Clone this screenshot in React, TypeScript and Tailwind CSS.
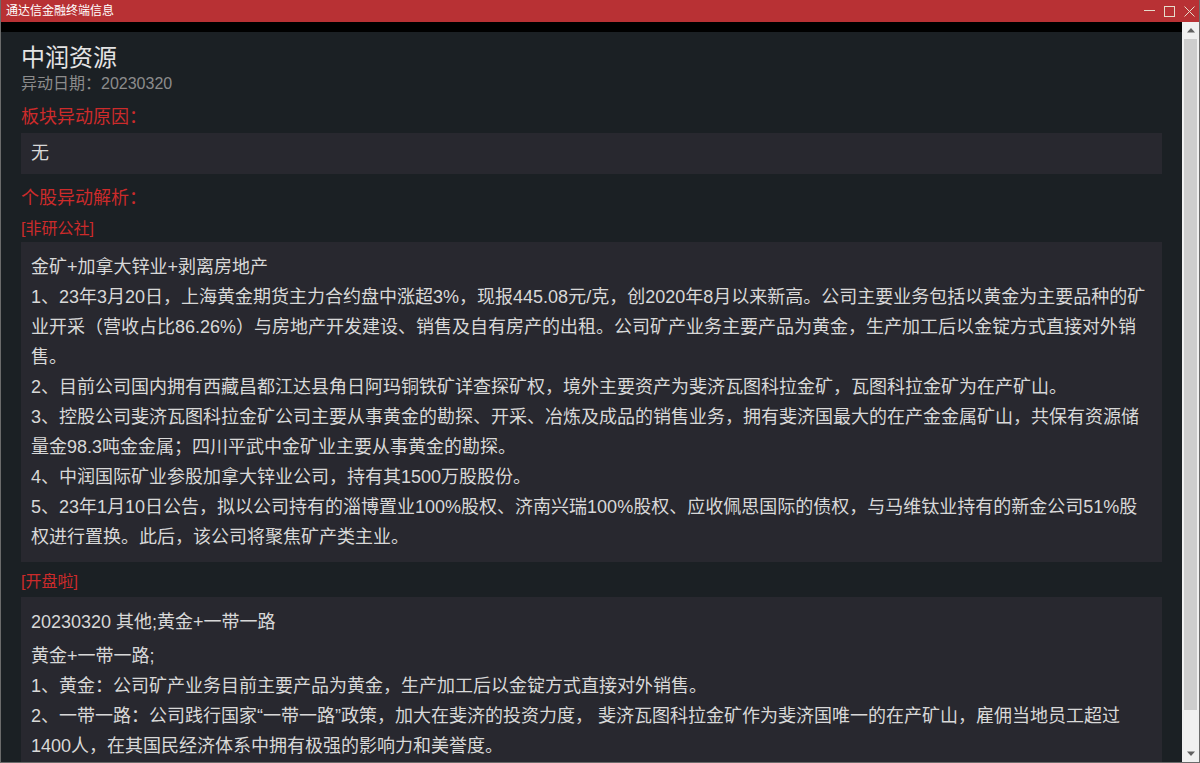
import React from "react";

const FONT = {
  fontFamily: '"Liberation Sans", "Noto Sans CJK SC", sans-serif',
};

const reasonLines = [
  "金矿+加拿大锌业+剥离房地产",
  "1、23年3月20日，上海黄金期货主力合约盘中涨超3%，现报445.08元/克，创2020年8月以来新高。公司主要业务包括以黄金为主要品种的矿",
  "业开采（营收占比86.26%）与房地产开发建设、销售及自有房产的出租。公司矿产业务主要产品为黄金，生产加工后以金锭方式直接对外销",
  "售。",
  "2、目前公司国内拥有西藏昌都江达县角日阿玛铜铁矿详查探矿权，境外主要资产为斐济瓦图科拉金矿，瓦图科拉金矿为在产矿山。",
  "3、控股公司斐济瓦图科拉金矿公司主要从事黄金的勘探、开采、冶炼及成品的销售业务，拥有斐济国最大的在产金金属矿山，共保有资源储",
  "量金98.3吨金金属；四川平武中金矿业主要从事黄金的勘探。",
  "4、中润国际矿业参股加拿大锌业公司，持有其1500万股股份。",
  "5、23年1月10日公告，拟以公司持有的淄博置业100%股权、济南兴瑞100%股权、应收佩思国际的债权，与马维钛业持有的新金公司51%股",
  "权进行置换。此后，该公司将聚焦矿产类主业。",
];

const kplLines = [
  "黄金+一带一路;",
  "1、黄金：公司矿产业务目前主要产品为黄金，生产加工后以金锭方式直接对外销售。",
  "2、一带一路：公司践行国家“一带一路”政策，加大在斐济的投资力度， 斐济瓦图科拉金矿作为斐济国唯一的在产矿山，雇佣当地员工超过",
  "1400人，在其国民经济体系中拥有极强的影响力和美誉度。",
];

function TitleBar() {
  return (
    <div className="flex h-[22px] items-center bg-[#b83134] pl-[5px] pr-[4px]">
      <span className="text-[12px] leading-none text-white">通达信金融终端信息</span>
      <div className="ml-auto flex items-center gap-[9px]">
        <svg width="11" height="11" viewBox="0 0 11 11" className="text-[#e6dccb]">
          <path d="M0 4.5H11" stroke="currentColor" strokeWidth="1" />
        </svg>
        <svg width="11" height="11" viewBox="0 0 11 11" className="text-[#e6dccb]">
          <rect x="0.5" y="0.5" width="10" height="10" fill="none" stroke="currentColor" strokeWidth="1" />
        </svg>
        <svg width="11" height="11" viewBox="0 0 11 11" className="text-[#e6dccb]">
          <path d="M0.5 0.5L10.5 10.5M10.5 0.5L0.5 10.5" stroke="currentColor" strokeWidth="1" />
        </svg>
      </div>
    </div>
  );
}

function ScrollBar() {
  return (
    <div className="flex w-[17px] shrink-0 flex-col bg-[#f0f0f0]">
      <div className="flex h-[17px] items-center justify-center">
        <svg width="8" height="5" viewBox="0 0 8 5">
          <path d="M4 0L8 4.5H0Z" fill="#606060" />
        </svg>
      </div>
      <div className="mx-[2px] h-[671px] bg-[#cdcdcd]" />
      <div className="flex-1" />
      <div className="flex h-[17px] items-center justify-center">
        <svg width="8" height="5" viewBox="0 0 8 5">
          <path d="M0 0.5H8L4 5Z" fill="#606060" />
        </svg>
      </div>
    </div>
  );
}

function Lines({ lines }: { lines: string[] }) {
  return (
    <div>
      {lines.map((l, i) => (
        <div key={i} className="whitespace-nowrap">
          {l}
        </div>
      ))}
    </div>
  );
}

export default function App() {
  return (
    <div
      className="flex h-[763px] w-[1200px] flex-col overflow-hidden border border-t-0 border-[#6b6b6b] bg-[#1b2024]"
      style={FONT}
    >
      <TitleBar />
      <div className="flex min-h-0 flex-1">
        <div className="flex min-w-0 flex-1 flex-col">
          <div className="h-[10px] shrink-0 bg-black" />
          <div className="min-h-0 flex-1 overflow-hidden pl-[20px] pr-[20px] pt-[11px]">
            <div className="text-[24px] leading-[30px] text-[#e4e4e4]">中润资源</div>
            <div className="text-[16px] leading-[22px] text-[#8c8c8c]">异动日期：20230320</div>

            <div className="mt-[10px] text-[18px] leading-[24px] text-[#cc2b2b]">板块异动原因：</div>
            <div className="mt-[4px] flex h-[41px] items-center bg-[#28282f] px-[10px] text-[18px] text-[#d8d8d8]">
              无
            </div>

            <div className="mt-[12px] text-[18px] leading-[24px] text-[#cc2b2b]">个股异动解析：</div>
            <div className="mt-[8px] text-[16px] leading-[22px] text-[#cc2b2b]">[非研公社]</div>
            <div className="mt-[2px] bg-[#28282f] px-[10px] py-[10px] text-[18px] leading-[30px] text-[#d8d8d8]">
              <Lines lines={reasonLines} />
            </div>

            <div className="mt-[9px] text-[16px] leading-[22px] text-[#cc2b2b]">[开盘啦]</div>
            <div className="mt-[4px] bg-[#28282f] px-[10px] py-[10px] text-[18px] leading-[30px] text-[#d8d8d8]">
              <div className="whitespace-nowrap">20230320 其他;黄金+一带一路</div>
              <div className="mt-[4px]">
                <Lines lines={kplLines} />
              </div>
            </div>
          </div>
        </div>
        <ScrollBar />
      </div>
    </div>
  );
}
